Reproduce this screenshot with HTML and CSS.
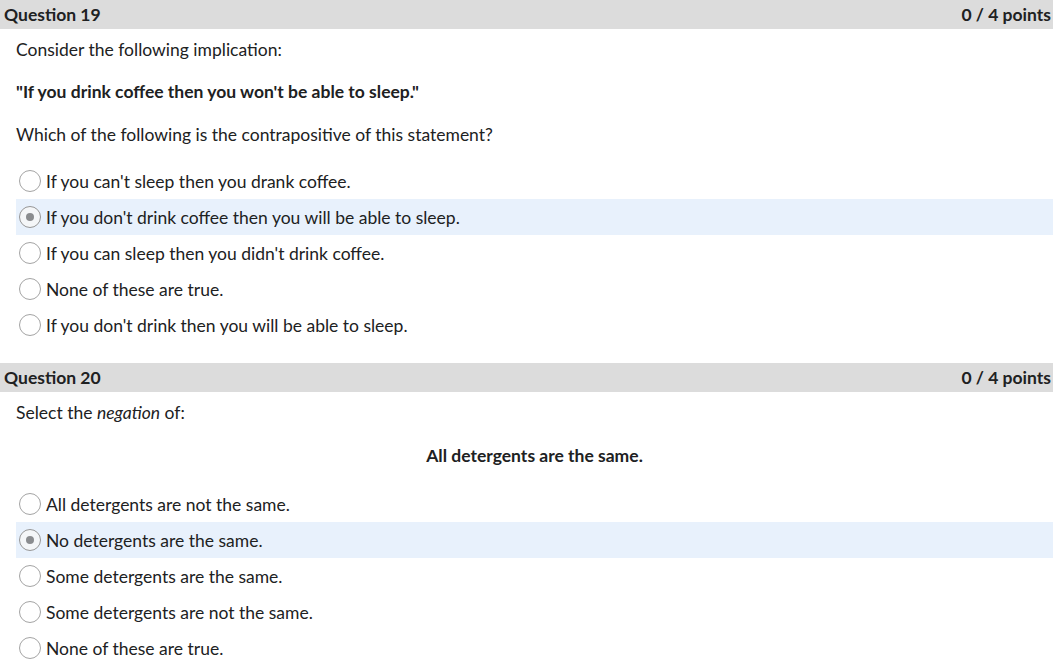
FILE: index.html
```html
<!DOCTYPE html>
<html>
<head>
<meta charset="utf-8">
<link rel="stylesheet" href="styles.css">
</head>
<body>
<div class="question">
  <div class="qhead"><span>Question 19</span><span>0 / 4 points</span></div>
  <div class="qbody">
    <p class="p1">Consider the following implication:</p>
    <p class="p2"><b>"If you drink coffee then you won't be able to sleep."</b></p>
    <p class="p3">Which of the following is the contrapositive of this statement?</p>
    <div class="options">
      <div class="opt"><span class="radio"></span><span>If you can't sleep then you drank coffee.</span></div>
      <div class="opt sel"><span class="radio on"></span><span>If you don't drink coffee then you will be able to sleep.</span></div>
      <div class="opt"><span class="radio"></span><span>If you can sleep then you didn't drink coffee.</span></div>
      <div class="opt"><span class="radio"></span><span>None of these are true.</span></div>
      <div class="opt"><span class="radio"></span><span>If you don't drink then you will be able to sleep.</span></div>
    </div>
  </div>
</div>
<div class="question q20">
  <div class="qhead"><span>Question 20</span><span>0 / 4 points</span></div>
  <div class="qbody">
    <p class="p1">Select the <i>negation</i> of:</p>
    <p class="center"><b>All detergents are the same.</b></p>
    <div class="options o2">
      <div class="opt"><span class="radio"></span><span>All detergents are not the same.</span></div>
      <div class="opt sel"><span class="radio on"></span><span>No detergents are the same.</span></div>
      <div class="opt"><span class="radio"></span><span>Some detergents are the same.</span></div>
      <div class="opt"><span class="radio"></span><span>Some detergents are not the same.</span></div>
      <div class="opt"><span class="radio"></span><span>None of these are true.</span></div>
    </div>
  </div>
</div>
</body>
</html>
```
FILE: styles.css
```css
html, body {
  margin: 0;
  padding: 0;
  background: #fff;
}
body {
  font-family: Lato, "Noto Sans", sans-serif;
  font-size: 17.5px;
  color: #202122;
  width: 1053px;
}
.qhead {
  display: flex;
  justify-content: space-between;
  align-items: center;
  background: #dcdcdc;
  height: 29px;
  padding: 0 2px 0 4px;
  font-weight: bold;
}
.qbody {
  padding-left: 16px;
}
p {
  margin: 0;
  line-height: 20px;
}
.p1 { padding-top: 11px; }
.p2 { padding-top: 22px; }
.p3 { padding-top: 23px; }
.center { text-align: center; padding-top: 23px; }
.options {
  padding-top: 18px;
  display: flex;
  flex-direction: column;
}
.o2 { padding-top: 20px; }
.opt {
  display: flex;
  align-items: center;
  height: 36px;
  gap: 5px;
}
.sel {
  background: #e8f1fc;
}
.radio {
  box-sizing: border-box;
  width: 22px;
  height: 22px;
  border: 1px solid #a4a4a4;
  border-radius: 50%;
  background: #fff;
  margin-left: 3px;
  display: flex;
  align-items: center;
  justify-content: center;
}
.radio.on {
  background: #f4f6f8;
  border-color: #969696;
}
.radio.on::after {
  content: "";
  width: 8px;
  height: 8px;
  border-radius: 50%;
  background: #8a8c8f;
}
.q20 { margin-top: 20px; }
```
